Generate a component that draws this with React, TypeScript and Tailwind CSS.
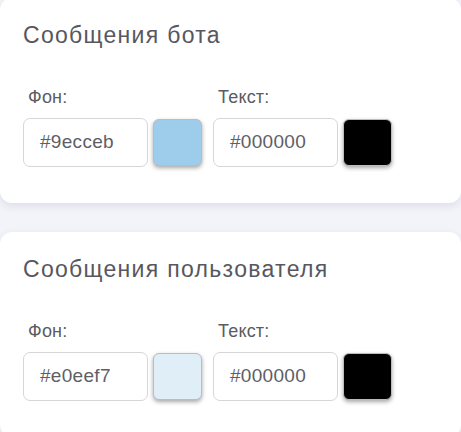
const font = { fontFamily: '"Liberation Sans", Arial, sans-serif' };

type ColorField = { label: string; value: string };

function ColorInput({ field }: { field: ColorField }) {
  return (
    <div className="flex flex-col">
      <label className="ml-[5px] text-[18px] leading-[20px] tracking-[0.2px] text-[#5b5b62]">{field.label}</label>
      <div className="mt-[11px] flex items-center gap-[5px]">
        <div className="flex h-[49px] w-[125px] items-center rounded-[7px] border border-[#d6d6d9] bg-white pl-[16px] text-[19px] tracking-[0.3px] text-[#5e5e66]">
          {field.value}
        </div>
        <div
          className="h-[47px] w-[49px] rounded-[6px] border border-[#b9bcc2] shadow-[0_2px_4px_rgba(0,0,0,0.35)]"
          style={{ backgroundColor: field.value }}
        />
      </div>
    </div>
  );
}

function Card({ title, bg, text }: { title: string; bg: string; text: string }) {
  return (
    <div className="rounded-[12px] bg-white px-[23px] pt-[23px] pb-[36px] shadow-[0_3px_8px_rgba(40,40,70,0.10)]">
      <h2 className="text-[23px] leading-[28px] tracking-[1.3px] text-[#57575f]">{title}</h2>
      <div className="mt-[38px] flex gap-[11px]">
        <ColorInput field={{ label: "Фон:", value: bg }} />
        <ColorInput field={{ label: "Текст:", value: text }} />
      </div>
    </div>
  );
}

export default function App() {
  return (
    <div className="h-[432px] overflow-hidden bg-[#f3f4f9]" style={font}>
      <div className="-mt-[2px] flex flex-col gap-[29px]">
        <Card title="Сообщения бота" bg="#9ecceb" text="#000000" />
        <Card title="Сообщения пользователя" bg="#e0eef7" text="#000000" />
      </div>
    </div>
  );
}
